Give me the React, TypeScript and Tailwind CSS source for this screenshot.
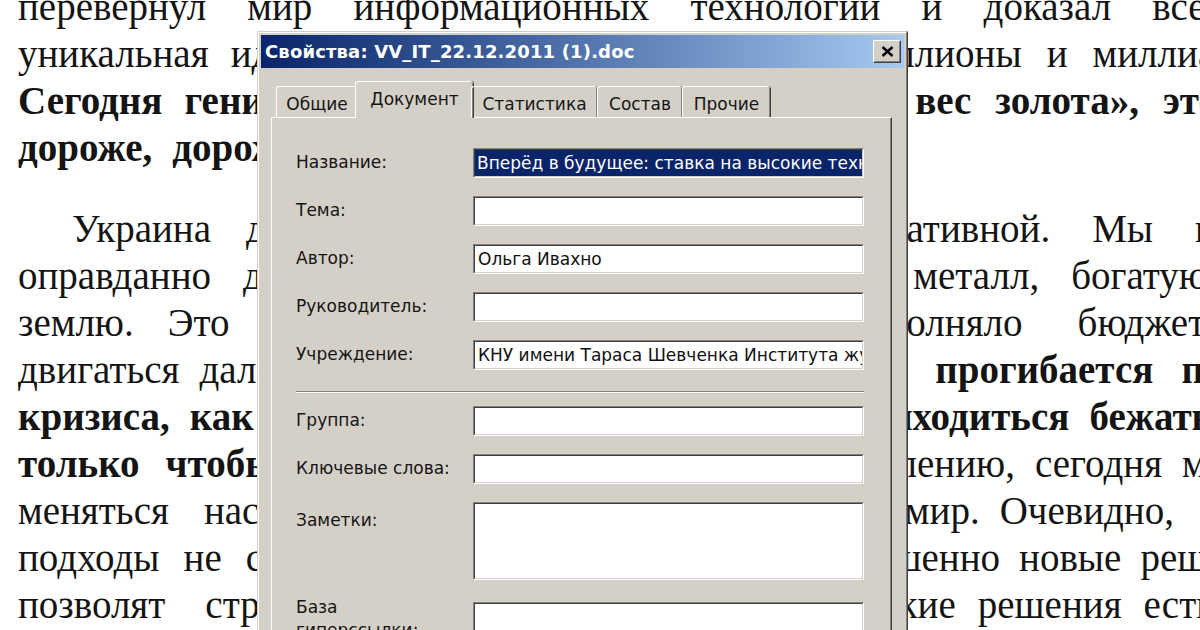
import type { ReactNode } from "react";

// l = words on the left of the dialog, m = hidden middle, r = words on the right
// "*" in front of a word = bold
type Line = {
  l: string;
  m?: string;
  r?: string;
  w: string;
  gl?: string;
  gr?: string;
  indent?: boolean;
  full?: boolean;
  left?: boolean;
};

const P1: Line[] = [
  { l: "перевернул мир информационных технологии и доказал всем,", w: "w-[1222px]", full: true },
  { l: "уникальная идея может принести", r: "миллионы и миллиарды.", w: "w-[1272px]", gl: "gap-[22px]", gr: "gap-[25px]" },
  { l: "*Сегодня *гениальная *идея *ценится", m: "*«на", r: "*вес *золота», *это", w: "w-[1200px]", gl: "gap-[22px]", gr: "gap-[24px]" },
  { l: "*дороже, *дороже *нефти *и *газа.", w: "w-[900px]", gl: "gap-[20px]", left: true },
];

const P2: Line[] = [
  { l: "Украина долго не была страной", r: "инновативной. Мы вполне", w: "w-[1293px]", gl: "gap-[35px]", gr: "gap-[42px]", indent: true },
  { l: "оправданно делали ставку на", r: "зерно, металл, богатую", w: "w-[1190px]", gl: "gap-[32px]", gr: "gap-[32px]" },
  { l: "землю. Это долгое время", r: "хорошо пополняло бюджет,", w: "w-[1194px]", gl: "gap-[34px]", gr: "gap-[55px]" },
  { l: "двигаться дальше. Сегодня,", m: "когда", r: "мира *прогибается *под", w: "w-[1224px]", gl: "gap-[20px]", gr: "gap-[28px]" },
  { l: "*кризиса, *как *никогда *раньше", r: "*нам *приходиться *бежать,", w: "w-[1204px]", gl: "gap-[20px]", gr: "gap-[20px]" },
  { l: "*только *чтобы *остаться *на *месте.", r: "К сожалению, сегодня мы", w: "w-[1215px]", gl: "gap-[26px]", gr: "gap-[20px]" },
  { l: "меняться настолько быстро,", m: "как меняется", r: "мир. Очевидно,", w: "w-[1156px]", gl: "gap-[35px]", gr: "gap-[20px]" },
  { l: "подходы не сработают,", m: "нужны", r: "совершенно новые решения,", w: "w-[1276px]", gl: "gap-[24px]", gr: "gap-[19px]" },
  { l: "позволят стране сделать", m: "рывок вперёд.", r: "Такие решения есть", w: "w-[1196px]", gl: "gap-[40px]", gr: "gap-[22px]" },
];

function Words({ text, className }: { text: string; className: string }) {
  return (
    <span className={`flex shrink-0 ${className}`}>
      {text.split(" ").map((w, i) =>
        w.startsWith("*") ? (
          <b key={i} className="font-bold">
            {w.slice(1)}
          </b>
        ) : (
          <span key={i}>{w}</span>
        )
      )}
    </span>
  );
}

function TextLine({ line }: { line: Line }) {
  if (line.full) {
    return (
      <div className={`${line.w} flex justify-between whitespace-nowrap`}>
        {line.l.split(" ").map((w, i) => (
          <span key={i}>{w}</span>
        ))}
      </div>
    );
  }
  return (
    <div
      className={`${line.w} ${line.indent ? "pl-[54px]" : ""} ${
        line.left ? "" : "justify-between"
      } flex whitespace-nowrap`}
    >
      <Words text={line.l} className={line.gl ?? ""} />
      {line.m && <Words text={line.m} className="gap-[12px]" />}
      {line.r && <Words text={line.r} className={line.gr ?? ""} />}
    </div>
  );
}

function Field({ className, children }: { className: string; children?: ReactNode }) {
  return (
    <div className={`${className} border border-t-[#808080] border-l-[#808080] border-b-white border-r-white`}>
      <div className="h-full overflow-hidden whitespace-nowrap border border-t-[#404040] border-l-[#404040] border-b-[#d4d0c8] border-r-[#d4d0c8] bg-white text-[17px] leading-[26px] text-[#111]">
        {children}
      </div>
    </div>
  );
}

function Row({ label, children }: { label: string; children?: ReactNode }) {
  return (
    <div className="flex items-center">
      <div className="w-[177px]">{label}</div>
      <Field className="h-[30px] w-[391px]">{children}</Field>
    </div>
  );
}

const TABS = [
  { label: "Общие", w: "w-[81px]" },
  { label: "Документ", w: "w-[118px]", active: true },
  { label: "Статистика", w: "w-[126px]" },
  { label: "Состав", w: "w-[85px]" },
  { label: "Прочие", w: "w-[88px]" },
];

function Dialog() {
  return (
    <div className="absolute left-[257px] top-[31px] h-[620px] w-[651px] border border-t-[#d4d0c8] border-l-[#d4d0c8] border-b-[#404040] border-r-[#404040] bg-[#d4d0c8] font-['DejaVu_Sans',sans-serif] text-[#151515]">
      <div className="h-full border border-t-white border-l-white border-b-[#808080] border-r-[#808080] p-[2px]">
        {/* title bar */}
        <div className="flex h-[33px] items-center justify-between bg-gradient-to-r from-[#0a246a] to-[#a6caf0] pl-[4px] pr-[3px]">
          <span className="text-[18px] font-bold tracking-[0.15px] text-white">
            Свойства: VV_IT_22.12.2011 (1).doc
          </span>
          <div className="h-[23px] w-[28px] border border-t-white border-l-white border-b-[#404040] border-r-[#404040] bg-[#d4d0c8]">
            <div className="flex h-full items-center justify-center border border-t-[#d4d0c8] border-l-[#d4d0c8] border-b-[#808080] border-r-[#808080]">
              <svg width="13" height="11" viewBox="0 0 13 11">
                <path d="M1.5 1 L11.5 10 M11.5 1 L1.5 10" stroke="#000" strokeWidth="2.4" />
              </svg>
            </div>
          </div>
        </div>

        <div className="px-[10px] pt-[13px]">
          {/* tabs */}
          <div className="relative z-10 flex h-[36px] items-end pl-[5px] text-[17px]">
            {TABS.map((t) =>
              t.active ? (
                <div
                  key={t.label}
                  className={`${t.w} -mx-[2px] -mb-px flex h-[37px] items-start justify-center rounded-t-[3px] border-l border-t border-white bg-[#d4d0c8] pt-[5px] shadow-[inset_-1px_0_0_#808080,1px_0_0_#404040]`}
                >
                  {t.label}
                </div>
              ) : (
                <div
                  key={t.label}
                  className={`${t.w} flex h-[31px] items-start justify-center rounded-t-[3px] border-l border-t border-white pt-[5px] shadow-[inset_-1px_0_0_#808080,1px_0_0_#404040]`}
                >
                  {t.label}
                </div>
              )
            )}
          </div>

          {/* panel */}
          <div className="h-[560px] w-[621px] border border-t-white border-l-white border-r-[#404040] shadow-[inset_-1px_0_0_#808080] pl-[24px] pt-[30px] text-[17px]">
            <div className="flex flex-col gap-[18px]">
              <Row label="Название:">
                <span className="inline-block h-full bg-[#0a246a] pl-[2px] text-white">
                  Вперёд в будущее: ставка на высокие технологии
                </span>
              </Row>
              <Row label="Тема:" />
              <Row label="Автор:">
                <span className="pl-[3px]">Ольга Ивахно</span>
              </Row>
              <Row label="Руководитель:" />
              <Row label="Учреждение:">
                <span className="pl-[3px]">КНУ имени Тараса Шевченка Института журналистики</span>
              </Row>
            </div>

            <div className="mt-[21px] h-[2px] w-[568px] border-t border-b border-t-[#808080] border-b-white" />

            <div className="mt-[13px] flex flex-col gap-[18px]">
              <Row label="Группа:" />
              <Row label="Ключевые слова:" />
              <div className="flex items-start">
                <div className="w-[177px] pt-[6px]">Заметки:</div>
                <Field className="h-[78px] w-[391px]" />
              </div>
              <div className="mt-[4px] flex items-start">
                <div className="-mt-[6px] w-[177px] leading-[23px]">
                  База
                  <br />
                  гиперссылки:
                </div>
                <Field className="h-[30px] w-[391px]" />
              </div>
            </div>
          </div>
        </div>
      </div>
    </div>
  );
}

export default function App() {
  return (
    <div className="relative h-[630px] w-[1200px] overflow-hidden bg-white">
      <div className="-mt-[17px] pl-[18px] font-['Liberation_Serif','Times_New_Roman',serif] text-[39px] leading-[47px] text-[#141414]">
        <div>
          {P1.map((l, i) => (
            <TextLine key={i} line={l} />
          ))}
        </div>
        <div className="mt-[34px]">
          {P2.map((l, i) => (
            <TextLine key={i} line={l} />
          ))}
        </div>
      </div>
      <Dialog />
    </div>
  );
}
